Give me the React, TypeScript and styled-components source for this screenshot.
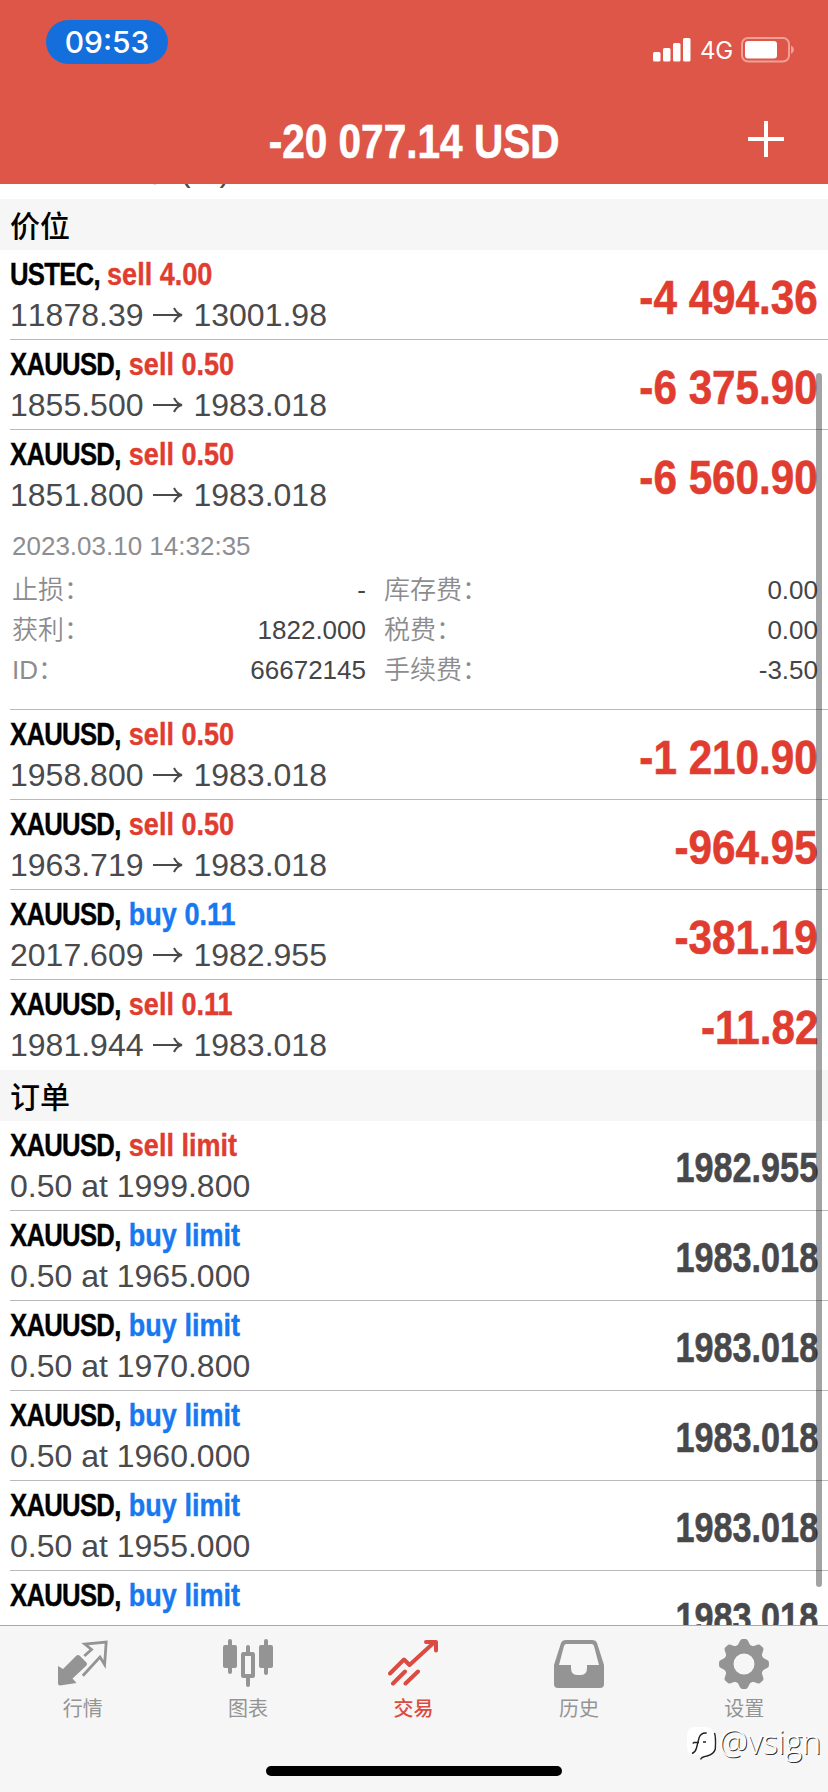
import React from "react";
import styled, { createGlobalStyle } from "styled-components";

const RED = "#e03c30";
const BLUE = "#1878f0";
const GRAY = "#949494";
const SANS = '"Liberation Sans", "Noto Sans CJK SC", Arial, sans-serif';

const GlobalStyle = createGlobalStyle`
  * { box-sizing: border-box; }
  body { margin: 0; background: #fff; font-family: ${SANS}; font-kerning: none; }
`;

const Screen = styled.div`
  position: relative;
  display: flex;
  flex-direction: column;
  width: 828px;
  height: 1792px;
  overflow: hidden;
  background: #fff;
`;

const Header = styled.header`
  flex: none;
  height: 184px;
  background: #dd5648;
  color: #fff;
`;

const StatusBar = styled.div`
  display: flex;
  justify-content: space-between;
  height: 97px;
  padding: 20px 33px 0 46px;
`;

const Clock = styled.div`
  width: 122px;
  height: 44px;
  border-radius: 22px;
  background: #146fdc;
  font: 500 30px/45px Inter, sans-serif;
  text-align: center;
`;

const Signals = styled.div`
  display: flex;
  align-items: center;
  height: 60px;
`;

const Network = styled.span`
  width: 32px;
  margin: 1px 9px 0 9px;
  font: 400 24px/30px Inter, sans-serif;
  letter-spacing: -0.3px;
`;

const TitleBar = styled.div`
  display: grid;
  grid-template-columns: 1fr auto 1fr;
  align-items: center;
  height: 87px;
  padding: 0 44px;
`;

const Title = styled.h1`
  grid-column: 2;
  margin: 3px 0 0;
  font: 700 48px/60px ${SANS};
  white-space: nowrap;
  transform: scaleX(0.845);
  -webkit-text-stroke: 0.6px currentColor;
`;

const AddIcon = styled.svg`
  justify-self: end;
  margin-top: -4px;
`;

const List = styled.main`
  display: flex;
  flex-direction: column;
  height: 1441px;
  overflow: hidden;
`;

const Peek = styled.div`
  flex: none;
  display: flex;
  align-items: flex-end;
  height: 15px;
  padding: 0 0 11px 10px;
  overflow: hidden;
  font-size: 32px;
  line-height: 36px;
  letter-spacing: 0.2px;
  color: #4a4a4d;
`;

const SectionTitle = styled.h2`
  flex: none;
  height: 51px;
  margin: 0;
  padding-left: 10px;
  background: #f6f6f6;
  font: 500 30px/50px "Noto Sans CJK SC", sans-serif;
`;

const Item = styled.section<{ $last?: boolean }>`
  flex: none;
  margin-left: 10px;
  border-bottom: 1px solid ${(p) => (p.$last ? "transparent" : "#bababc")};
`;

const Row = styled.div`
  display: flex;
  justify-content: space-between;
  align-items: center;
  height: 89px;
  padding-right: 10px;
`;

const Heading = styled.div`
  font: 700 32px/40px ${SANS};
  color: #000;
  white-space: pre;
  transform: scaleX(0.845);
  transform-origin: left;
  -webkit-text-stroke: 0.4px currentColor;
`;

const Ticker = styled.span`
  display: inline-block;
  margin-right: -8px;
  letter-spacing: -0.9px;
  transform: scaleX(0.95);
  transform-origin: left;
`;

const Side = styled.span<{ $buy?: boolean }>`
  margin-left: 2px;
  color: ${(p) => (p.$buy ? BLUE : RED)};
`;

const Prices = styled.div`
  display: flex;
  align-items: center;
  height: 42px;
  padding-top: 1px;
  font-size: 32px;
  line-height: 41px;
  color: #4a4a4d;
`;

const ArrowIcon = styled.svg`
  margin: 0 9px 0 9px;
`;

const Amount = styled.div<{ $quote?: boolean }>`
  margin-top: ${(p) => (p.$quote ? 4 : 6)}px;
  font: 700 ${(p) => (p.$quote ? 42 : 48)}px/56px ${SANS};
  color: ${(p) => (p.$quote ? "#48484b" : RED)};
  white-space: nowrap;
  transform: scaleX(${(p) => (p.$quote ? 0.815 : 0.88)});
  transform-origin: right;
  -webkit-text-stroke: 0.6px currentColor;
`;

const Details = styled.div`
  height: 190px;
  padding: 11px 10px 0 2px;
  font-size: 26px;
  line-height: 40px;
  color: #8e8e90;
`;

const Opened = styled.div`
  height: 40px;
  line-height: 32px;
`;

const Grid = styled.dl`
  display: grid;
  grid-template-columns: 354px 1fr;
  column-gap: 18px;
  margin: 0;
`;

const Pair = styled.div`
  display: flex;
  justify-content: space-between;
  height: 40px;
`;

const Term = styled.dt`
  font-weight: 350;
  color: #8c8c8e;
`;

const Value = styled.dd`
  margin: 0;
  color: #454547;
`;

const ScrollThumb = styled.div`
  position: absolute;
  top: 373px;
  left: 816px;
  width: 6px;
  height: 1214px;
  border-radius: 3px;
  background: rgba(0, 0, 0, 0.36);
`;

const TabBar = styled.nav`
  flex: none;
  display: grid;
  grid-template-columns: repeat(5, 1fr);
  height: 167px;
  padding-right: 1px;
  border-top: 1px solid #a9a9ab;
  background: #f6f6f6;
`;

const Tab = styled.div<{ $active?: boolean }>`
  display: flex;
  flex-direction: column;
  align-items: center;
  padding-top: 13px;
  color: ${(p) => (p.$active ? "#dc4b42" : GRAY)};
  font: ${(p) => (p.$active ? 500 : 400)} 20px/28px "Noto Sans CJK SC", sans-serif;
`;

const TabIcon = styled.svg`
  display: block;
  margin-bottom: 5px;
`;

const HomeIndicator = styled.div`
  position: absolute;
  left: 266px;
  top: 1766px;
  width: 296px;
  height: 10px;
  border-radius: 5px;
  background: #000;
`;

const Watermark = styled.div`
  position: absolute;
  left: 685px;
  top: 1723px;
  display: flex;
  align-items: center;
  font: 300 32.5px/38px "Open Sans", "Noto Sans", sans-serif;
  color: #fff;
  text-shadow: 1px 1px 0.5px #333, 0 0 2px #fff;
`;

type Position = { symbol: string; side: string; from: string; to: string; amount: string; open?: boolean };

const positions: Position[] = [
  { symbol: "USTEC", side: "sell 4.00", from: "11878.39", to: "13001.98", amount: "-4 494.36" },
  { symbol: "XAUUSD", side: "sell 0.50", from: "1855.500", to: "1983.018", amount: "-6 375.90" },
  { symbol: "XAUUSD", side: "sell 0.50", from: "1851.800", to: "1983.018", amount: "-6 560.90", open: true },
  { symbol: "XAUUSD", side: "sell 0.50", from: "1958.800", to: "1983.018", amount: "-1 210.90" },
  { symbol: "XAUUSD", side: "sell 0.50", from: "1963.719", to: "1983.018", amount: "-964.95" },
  { symbol: "XAUUSD", side: "buy 0.11", from: "2017.609", to: "1982.955", amount: "-381.19" },
  { symbol: "XAUUSD", side: "sell 0.11", from: "1981.944", to: "1983.018", amount: "-11.82" },
];

const orders = [
  { side: "sell limit", price: "1999.800", quote: "1982.955" },
  { side: "buy limit", price: "1965.000", quote: "1983.018" },
  { side: "buy limit", price: "1970.800", quote: "1983.018" },
  { side: "buy limit", price: "1960.000", quote: "1983.018" },
  { side: "buy limit", price: "1955.000", quote: "1983.018" },
  { side: "buy limit", price: "1950.000", quote: "1983.018" },
];

const details: [string, string][] = [
  ["止损", "-"],
  ["库存费", "0.00"],
  ["获利", "1822.000"],
  ["税费", "0.00"],
  ["ID", "66672145"],
  ["手续费", "-3.50"],
];

const Name = ({ symbol, side }: { symbol: string; side: string }) => (
  <Heading>
    <Ticker>{symbol},</Ticker> <Side $buy={side.startsWith("buy")}>{side}</Side>
  </Heading>
);

const gearPath = (() => {
  const points: string[] = [];
  for (let i = 0; i < 8; i++) {
    const base = (i * Math.PI) / 4;
    const at = (r: number, d: number) => {
      const a = base + (d * Math.PI) / 180;
      return `${(25 + r * Math.sin(a)).toFixed(2)} ${(25 - r * Math.cos(a)).toFixed(2)}`;
    };
    points.push(
      `${i ? "L" : "M"}${at(20, -18)} L${at(23.4, -10)} Q${at(25.2, -7)} ${at(25, -4)} L${at(25, 4)} Q${at(25.2, 7)} ${at(23.4, 10)} L${at(20, 18)}`
    );
  }
  return points.join(" ") + "Z M25 14.5a10.5 10.5 0 1 0 0 21a10.5 10.5 0 1 0 0-21Z";
})();

const tabs = [
  {
    label: "行情",
    icon: (
      <>
        <path fill="currentColor" d="M0 27L5 30L18 17Q20 15 22 17L28 23Q30 25 28 27L14.5 39.5L18.5 44L2 46.5Q0 46.5 0 44.5Z" />
        <path fill="none" stroke="currentColor" strokeWidth="2.8" d="M26.3 17L33.5 10.5L26.8 5L48.2 3L46.6 25.5L42 18L24.8 36.8" />
      </>
    ),
  },
  {
    label: "图表",
    icon: (
      <>
        <path stroke="currentColor" strokeWidth="4" strokeLinecap="round" d="M7 2V33M43 2V34M25 8V14M25 38V46" />
        <rect fill="currentColor" x="0" y="6" width="14" height="23" rx="2" />
        <rect fill="currentColor" x="36" y="6" width="14" height="23" rx="2" />
        <rect fill="none" stroke="currentColor" strokeWidth="4" x="20" y="15" width="10" height="22" rx="0.5" />
      </>
    ),
  },
  {
    label: "交易",
    active: true,
    icon: (
      <path
        fill="none"
        stroke="currentColor"
        strokeWidth="4"
        strokeLinecap="round"
        strokeLinejoin="round"
        d="M2 34.5L16 20.5L21.5 26L46 3.5M38 3H48V11.5M5 44.5L17 32.5M17.5 44.5L30 32.5"
      />
    ),
  },
  {
    label: "历史",
    icon: (
      <>
        <path fill="currentColor" d="M12 1H38Q42 1 43 4L50 26V45Q50 49 46 49H4Q0 49 0 45V26L7 4Q8 1 12 1Z" />
        <path fill="#f6f6f6" d="M12.5 5H37.5Q39.5 5 40 7L45 26H33V29Q33 36 27 36H23Q17 36 17 29V26H5L10 7Q10.5 5 12.5 5Z" />
      </>
    ),
  },
  {
    label: "设置",
    icon: <path fill="currentColor" fillRule="evenodd" d={gearPath} />,
  },
];

export default function App() {
  return (
    <>
      <GlobalStyle />
      <Screen>
        <Header>
          <StatusBar>
            <Clock>09:53</Clock>
            <Signals>
              <svg width="38" height="24" viewBox="0 0 38 24" fill="#fff">
                <rect x="0" y="14" width="7.5" height="9.5" rx="1.5" />
                <rect x="10" y="10" width="7.5" height="13.5" rx="1.5" />
                <rect x="20" y="5" width="7.5" height="18.5" rx="1.5" />
                <rect x="30" y="0" width="7.5" height="23.5" rx="1.5" />
              </svg>
              <Network>4G</Network>
              <svg width="54" height="26" viewBox="0 0 54 26">
                <rect x="1" y="1" width="47" height="23.5" rx="6" fill="none" stroke="#f0a097" strokeWidth="2" />
                <rect x="4" y="4" width="32" height="17.5" rx="3" fill="#fff" />
                <path d="M50 8.5Q53 10 53 12.8Q53 15.6 50 17Z" fill="#f0a097" />
              </svg>
            </Signals>
          </StatusBar>
          <TitleBar>
            <Title>-20 077.14 USD</Title>
            <AddIcon width="36" height="36" viewBox="0 0 36 36" stroke="#fff" strokeWidth="4">
              <path d="M18 0V36M0 18H36" />
            </AddIcon>
          </TitleBar>
        </Header>
        <List>
          <Peek>预付款比率 (%):</Peek>
          <SectionTitle>价位</SectionTitle>
          {positions.map((p, i) => (
            <Item key={i} $last={i === positions.length - 1}>
              <Row>
                <div>
                  <Name symbol={p.symbol} side={p.side} />
                  <Prices>
                    {p.from}
                    <ArrowIcon width="32" height="18" viewBox="0 0 32 18" fill="none" stroke="currentColor" strokeWidth="2">
                      <path d="M1 9H30M22 2Q25 8 30 9Q25 10 22 16" />
                    </ArrowIcon>
                    {p.to}
                  </Prices>
                </div>
                <Amount>{p.amount}</Amount>
              </Row>
              {p.open && (
                <Details>
                  <Opened>2023.03.10 14:32:35</Opened>
                  <Grid>
                    {details.map(([term, value]) => (
                      <Pair key={term}>
                        <Term>{term}：</Term>
                        <Value>{value}</Value>
                      </Pair>
                    ))}
                  </Grid>
                </Details>
              )}
            </Item>
          ))}
          <SectionTitle>订单</SectionTitle>
          {orders.map((o, i) => (
            <Item key={i}>
              <Row>
                <div>
                  <Name symbol="XAUUSD" side={o.side} />
                  <Prices>0.50 at {o.price}</Prices>
                </div>
                <Amount $quote>{o.quote}</Amount>
              </Row>
            </Item>
          ))}
        </List>
        <TabBar>
          {tabs.map((t) => (
            <Tab key={t.label} $active={t.active}>
              <TabIcon width="50" height="50" viewBox="0 0 50 50">
                {t.icon}
              </TabIcon>
              {t.label}
            </Tab>
          ))}
        </TabBar>
        <ScrollThumb />
        <HomeIndicator />
        <Watermark>
          <svg width="34" height="38" viewBox="0 0 34 38">
            <path d="M10 4H20Q30 4 30 16V22Q30 31 20 33L15 36V32H10Q2 32 2 24V13Q2 4 10 4Z" fill="#fff" />
            <path
              d="M21.7 10Q15.5 9.5 14 15L11.5 25Q10.5 29 7 30.5M7.7 20.5L9 19.5H14M18 19H21M29.5 10Q31 14 30.3 26Q29 31 22 33Q16 34 15.7 36.5"
              fill="none"
              stroke="#222"
              strokeWidth="1.4"
            />
          </svg>
          @vsign
        </Watermark>
      </Screen>
    </>
  );
}
